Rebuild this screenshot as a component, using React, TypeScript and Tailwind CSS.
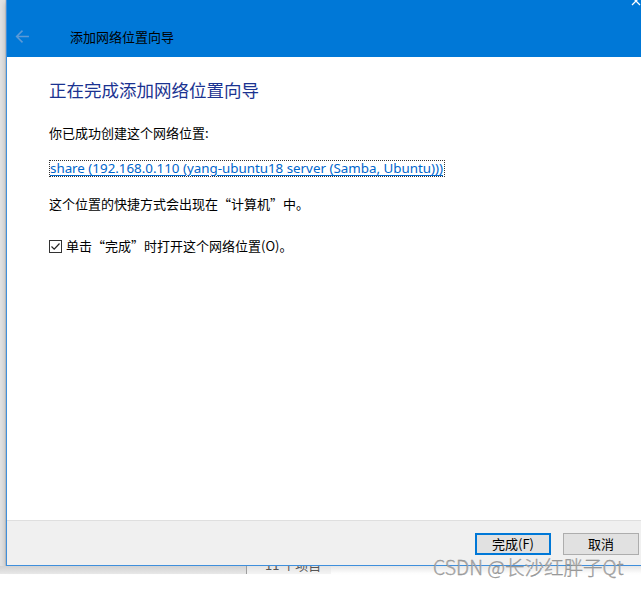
import React from "react";

const cjk = "font-['Noto_Sans_CJK_SC','Noto_Sans',sans-serif]";

export default function App() {
  return (
    <div className={`relative w-[641px] h-[589px] overflow-hidden bg-white ${cjk}`}>
      <div className="flex h-[566px]">
        {/* background strip at left */}
        <div className="w-[6px] bg-[#e2e2e2] border-r border-[#d0d0d0]" />
        {/* window */}
        <div className="flex-1 flex flex-col border-l border-b border-[#3f8fdc] shadow-[0_2px_6px_rgba(0,0,0,0.25)]">
          {/* header */}
          <div className="relative h-[57px] bg-[#0078d7] flex items-center pt-[15px]">
            <svg className="ml-[8px] w-[15px] h-[15px]" viewBox="0 0 14 14" fill="none" stroke="#5d9ad6" strokeWidth="1.4">
              <path d="M13 7H1.5M7 1.5L1.5 7L7 12.5" />
            </svg>
            <span className="ml-[40px] text-[13px] text-black leading-none">添加网络位置向导</span>
            <svg className="absolute right-[0px] top-[-4px] w-[10px] h-[10px]" viewBox="0 0 10 10" stroke="white" strokeWidth="1.3">
              <path d="M1 1L9 9M9 1L1 9" />
            </svg>
          </div>
          {/* body */}
          <div className="flex-1 bg-white pl-[42px] flex flex-col items-start">
            <div className="mt-[21px] h-[24px] leading-[24px] text-[17.5px] text-[#1b3391]">正在完成添加网络位置向导</div>
            <div className="mt-[22px] h-[18px] leading-[18px] text-[13px] text-black">你已成功创建这个网络位置:</div>
            <div className="mt-[18px] h-[17px] border border-dotted border-[#333] flex items-center pr-[1px]">
              <span className="text-[13.35px] leading-[15px] text-[#0066cc] underline underline-offset-[2px] font-['Noto_Sans',sans-serif]">
                share (192.168.0.110 (yang-ubuntu18 server (Samba, Ubuntu)))
              </span>
            </div>
            <div className="mt-[18px] h-[18px] leading-[18px] text-[13px] text-black">这个位置的快捷方式会出现在“计算机”中。</div>
            <div className="mt-[24px] h-[18px] flex items-center gap-[4px]">
              <div className="w-[13px] h-[13px] border border-[#333] bg-white flex items-center justify-center">
                <svg viewBox="0 0 11 11" className="w-[11px] h-[11px]" fill="none" stroke="#222" strokeWidth="1.2">
                  <path d="M1.5 5.5L4.2 8.2L9.5 2.5" />
                </svg>
              </div>
              <span className="text-[13px] leading-[18px] text-black">单击“完成”时打开这个网络位置(O)。</span>
            </div>
          </div>
          {/* footer */}
          <div className="h-[45px] bg-[#f0f0f0] border-t border-[#dfdfdf] flex items-center justify-end gap-[12px] pr-[2px] pt-[1px]">
            <button className="w-[76px] h-[22px] bg-[#e1e1e1] border-2 border-[#0078d7] text-[13px] text-black leading-none flex items-center justify-center">
              完成(F)
            </button>
            <button className="w-[76px] h-[22px] bg-[#e1e1e1] border border-[#adadad] text-[13px] text-black leading-none flex items-center justify-center">
              取消
            </button>
          </div>
        </div>
      </div>
      {/* below the window */}
      <div className="flex h-[8px]">
        <div className="w-[246px] bg-gradient-to-b from-[#d2d2d2] to-[#e8e8e8]" />
        <div className="w-[1px] bg-[#9e9e9e]" />
        <div className="w-[84px] bg-gradient-to-b from-[#e4e4e4] to-[#f4f4f4] overflow-hidden">
          <div className="mt-[-9px] ml-[18px] text-[13px] leading-[16px] text-[#555]">11 个项目</div>
        </div>
        <div className="flex-1 bg-gradient-to-b from-[#e6e6e6] to-white" />
      </div>
      {/* watermark */}
      <div className="absolute left-[433px] top-[555px] text-[19.5px] leading-[24px] text-[#a8a8a8] font-['Noto_Sans_CJK_SC',sans-serif] font-light [-webkit-text-stroke:0.3px_#8a8a8a]">
        CSDN @长沙红胖子Qt
      </div>
    </div>
  );
}
